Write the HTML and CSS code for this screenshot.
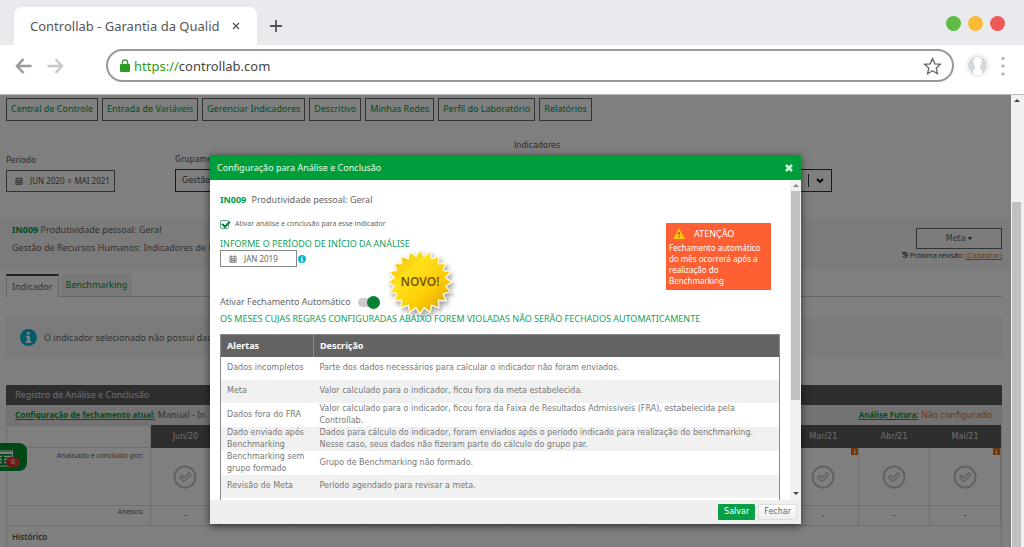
FILE: index.html
```html
<!DOCTYPE html>
<html lang="pt-BR">
<head>
<meta charset="utf-8">
<title>Controllab - Garantia da Qualidade</title>
<link rel="stylesheet" href="styles.css">
</head>
<body>
<svg class="defs" aria-hidden="true">
  <symbol id="cal" viewBox="0 0 14 14"><path fill="none" stroke="currentColor" stroke-width="1.2" d="M1.5 3h11v10h-11zM1.5 6h11M4.300 6v7M7 6v7M9.700 6v7M1.500 9.500h11"/><path stroke="currentColor" stroke-width="2" d="M4 1v3M10 1v3"/></symbol>
  <symbol id="info" viewBox="0 0 20 20"><circle cx="10" cy="10" r="10" fill="#0ab4d2"/><path fill="#fff" d="M8.200 3.500h3.400v3H8.200zM6.800 8h4.900v6.200h1.500v2.200H6.800v-2.200h1.500V10H6.800z"/></symbol>
  <symbol id="seal" viewBox="0 0 24 24"><circle cx="12" cy="12" r="10.500" fill="none" stroke="#c4c4c4" stroke-width="2"/><path d="M6.500 12.500l2-2 2.300 2.300 5-5 2 2-7 7z" fill="none" stroke="#c4c4c4" stroke-width="1.500"/></symbol>
</svg>
<header class="chrome">
  <div class="tabbar">
    <div class="tab"><span>Controllab - Garantia da Qualid</span>
      <button class="bare" aria-label="Fechar aba"><svg width="8" height="8" viewBox="0 0 8 8"><path d="M1 1l6 6M7 1L1 7" stroke="#555" stroke-width="1.300"/></svg></button></div>
    <button class="bare newtab" aria-label="Nova aba"><svg width="12" height="12" viewBox="0 0 12 12"><path d="M6 0v12M0 6h12" stroke="#555" stroke-width="1.800"/></svg></button>
    <div class="lights"><i class="green"></i><i class="yellow"></i><i class="red"></i></div>
  </div>
  <div class="toolbar">
    <button class="bare" aria-label="Voltar"><svg width="17" height="16" viewBox="0 0 17 16"><path d="M8.500 1L2 8l6.500 7M2 8h14.500" fill="none" stroke="#999" stroke-width="2.500"/></svg></button>
    <button class="bare" aria-label="Avançar"><svg width="17" height="16" viewBox="0 0 17 16"><path d="M8.500 1L15 8l-6.500 7M15 8H.5" fill="none" stroke="#c8c8c8" stroke-width="2.500"/></svg></button>
    <div class="address">
      <svg width="10" height="13" viewBox="0 0 10 13"><path d="M2.300 6V3.500a2.700 2.700 0 0 1 5.400 0V6" fill="none" stroke="#2f9a20" stroke-width="1.200"/><rect x="0" y="5" width="10" height="8" rx="1" fill="#2f9a20"/></svg>
      <span class="url"><span class="scheme">https://</span>controllab.com</span>
      <button class="bare" aria-label="Favoritar"><svg width="19" height="18" viewBox="0 0 19 18"><path d="M9.500 1.500l2.300 5.300 5.700.5-4.300 3.800 1.300 5.600-5-3-5 3 1.300-5.600L1.500 7.300l5.700-.5z" fill="none" stroke="#666" stroke-width="1.300"/></svg></button>
    </div>
    <svg class="avatar" width="23" height="23" viewBox="0 0 23 23"><circle cx="11.500" cy="11.500" r="11" fill="#fff" stroke="#e2e5e8"/><circle cx="11.500" cy="11.500" r="9.500" fill="#d3d8dd"/><path d="M11.500 3c3 0 4.300 2 4.200 4.800-.1 2-.9 3.400-1.700 4.400v2c0 1.200 1.500 1.800 2 2.600.4 2.200-1.500 4.200-4.500 4.200S6.600 19 7 16.800c.5-.8 2-1.400 2-2.600v-2C8.100 11 7.300 9.700 7.300 7.800 7.300 5 8.500 3 11.500 3z" fill="#fff"/></svg>
    <button class="bare" aria-label="Menu"><svg width="4" height="20" viewBox="0 0 4 20" fill="#b8b8b8"><circle cx="2" cy="2.500" r="1.800"/><circle cx="2" cy="10" r="1.800"/><circle cx="2" cy="18" r="1.800"/></svg></button>
  </div>
</header>
<div class="viewport">
  <main class="page">
    <nav class="nav">
      <a href="#">Central de Controle</a><a href="#">Entrada de Variáveis</a><a href="#">Gerenciar Indicadores</a><a href="#">Descritivo</a><a href="#">Minhas Redes</a><a href="#">Perfil do Laboratório</a><a href="#">Relatórios</a>
    </nav>
    <form class="filters">
      <div class="period"><label for="periodo">Período</label>
        <button type="button" id="periodo" class="date"><svg class="cal"><use href="#cal"/></svg>JUN 2020 <small>a</small> MAI 2021</button></div>
      <div class="group"><label for="grupo">Grupame</label>
        <select id="grupo"><option>Gestão</option></select></div>
      <div class="indicator"><label for="ind">Indicadores</label>
        <div class="chooser"><select id="ind"><option></option></select><svg width="8" height="6" viewBox="0 0 8 6"><path d="M1 1l3 3 3-3" fill="none" stroke="#000" stroke-width="1.800"/></svg></div></div>
    </form>
    <section class="summary">
      <div class="about"><p><b>IN009</b> Produtividade pessoal: Geral</p><p>Gestão de Recursos Humanos: Indicadores de G</p></div>
      <div class="goal"><button>Meta <i class="caret"></i></button>
        <p><svg width="6" height="6" viewBox="0 0 12 12"><path d="M2 3a5 5 0 1 1-.5 5M2 0v4h4M6 3v4h3" fill="none" stroke="#333" stroke-width="2"/></svg> Próxima revisão: <a href="#">(Cadastrar)</a></p></div>
    </section>
    <div class="tabs"><button class="on">Indicador</button><button>Benchmarking</button></div>
    <div class="notice"><svg width="17" height="17"><use href="#info"/></svg><span>O indicador selecionado não possui dad</span></div>
    <section class="register">
      <h2>Registro de Análise e Conclusão</h2>
      <div class="config"><span><a href="#">Configuração de fechamento atual:</a> Manual - In</span><span class="future"><a href="#">Análise Futura:</a> Não configurado</span></div>
      <table class="months">
        <thead><tr><td></td><th>Jun/20</th><th></th><th></th><th></th><th></th><th></th><th></th><th></th><th></th><th>Mar/21</th><th>Abr/21</th><th>Mai/21</th></tr></thead>
        <tbody>
          <tr class="signed"><th>Analisado e concluído por:</th><td><svg class="seal"><use href="#seal"/></svg></td><td></td><td></td><td></td><td></td><td></td><td></td><td></td><td></td><td><svg class="seal"><use href="#seal"/></svg><b class="flag">i</b></td><td><svg class="seal"><use href="#seal"/></svg></td><td><svg class="seal"><use href="#seal"/></svg><b class="flag">i</b></td></tr>
          <tr class="files"><th>Anexos:</th><td>-</td><td></td><td></td><td></td><td></td><td></td><td></td><td></td><td></td><td>-</td><td>-</td><td>-</td></tr>
        </tbody>
      </table>
      <h3>Histórico</h3>
    </section>
    <button class="dock" aria-label="Pendências"><svg width="13" height="17" viewBox="0 0 13 17"><path d="M0 1h12.500v15H0" fill="none" stroke="#fff" stroke-width="1.200"/><path d="M0 3h12" stroke="#fff" stroke-width="2"/><path d="M0 6.500h2M0 9.500h2M0 12.500h2M4 6.500h7M4 9.500h7M4 12.500h7" stroke="#fff" stroke-width="1.500"/></svg><span>0</span></button>
  </main>
  <div class="scroll pagescroll"><i class="up"></i><i class="thumb"></i></div>
  <div class="overlay">
    <div class="modal" role="dialog" aria-labelledby="mt">
      <div class="modalhead"><h1 id="mt">Configuração para Análise e Conclusão</h1>
        <button class="bare" aria-label="Fechar janela"><svg width="8" height="8" viewBox="0 0 8 8"><path d="M1 1l6 6M7 1L1 7" stroke="#c9f5d8" stroke-width="2.500"/></svg></button></div>
      <div class="modalmain">
        <div class="content">
          <div class="settings">
            <div class="fields">
              <p class="name"><b>IN009</b> Produtividade pessoal: Geral</p>
              <label class="enable"><input type="checkbox" class="check" checked>Ativar análise e conclusão para esse indicador</label>
              <label class="caps" for="inicio">INFORME O PERÍODO DE INÍCIO DA ANÁLISE</label>
              <div class="start"><button id="inicio" class="date"><svg class="cal"><use href="#cal"/></svg>JAN 2019</button><svg width="8" height="8"><use href="#info"/></svg></div>
              <label class="auto">Ativar Fechamento Automático<input type="checkbox" class="switch" checked></label>
            </div>
            <aside class="warning"><h2><svg width="12" height="11" viewBox="0 0 12 11"><path d="M6 0l6 11H0z" fill="#ffc20e"/><path d="M6 4v3M6 8v1.500" stroke="#a05a00" stroke-width="1.300"/></svg>ATENÇÃO</h2><p>Fechamento automático do mês ocorrerá após a realização do Benchmarking</p></aside>
            <div class="novo"><svg width="76" height="76" viewBox="-38 -38 76 76"><defs><linearGradient id="gold" x1="0" y1="0" x2="1" y2="1"><stop offset="0" stop-color="#e0b000"/><stop offset=".35" stop-color="#ffe11a"/><stop offset=".65" stop-color="#fbcb05"/><stop offset="1" stop-color="#cf9300"/></linearGradient></defs><polygon id="star" fill="url(#gold)" stroke="#fff8dc" stroke-width="1.500" points=""/></svg><span>NOVO!</span></div>
          </div>
          <p class="caps rules">OS MESES CUJAS REGRAS CONFIGURADAS ABAIXO FOREM VIOLADAS NÃO SERÃO FECHADOS AUTOMATICAMENTE</p>
          <table class="alerts">
            <thead><tr><th>Alertas</th><th>Descrição</th></tr></thead>
            <tbody>
              <tr><td>Dados incompletos</td><td>Parte dos dados necessários para calcular o indicador não foram enviados.</td></tr>
              <tr><td>Meta</td><td>Valor calculado para o indicador, ficou fora da meta estabelecida.</td></tr>
              <tr><td>Dados fora do FRA</td><td>Valor calculado para o indicador, ficou fora da Faixa de Resultados Admissíveis (FRA), estabelecida pela Controllab.</td></tr>
              <tr><td>Dado enviado após Benchmarking</td><td>Dados para cálculo do indicador, foram enviados após o período indicado para realização do benchmarking. Nesse caso, seus dados não fizeram parte do cálculo do grupo par.</td></tr>
              <tr><td>Benchmarking sem grupo formado</td><td>Grupo de Benchmarking não formado.</td></tr>
              <tr><td>Revisão de Meta</td><td>Período agendado para revisar a meta.</td></tr>
              <tr><td></td><td></td></tr>
            </tbody>
          </table>
        </div>
        <div class="scroll modalscroll"><i class="up"></i><i class="thumb"></i><i class="down"></i></div>
      </div>
      <footer><button class="save">Salvar</button><button class="close">Fechar</button></footer>
    </div>
  </div>
</div>
<script src="seal.js"></script>
</body>
</html>
```
FILE: seal.js
```js
// Star outline with alternating outer and inner radii.
const points = [];
const tips = 20;
for (let i = 0; i < tips * 2; i++) {
  const r = i % 2 ? 26 : 32;
  const a = Math.PI * i / tips - Math.PI / 2;
  points.push((r * Math.cos(a)).toFixed(1) + ',' + (r * Math.sin(a)).toFixed(1));
}
document.getElementById('star').setAttribute('points', points.join(' '));
```
FILE: styles.css
```css
* { box-sizing: border-box; }
body { margin: 0; height: 100vh; display: flex; flex-direction: column; overflow: hidden; font: 9px/12px "Noto Sans", sans-serif; color: #666; }
h1, h2, h3, p { margin: 0; font-size: 9px; }
button, select { font: inherit; color: inherit; margin: 0; }
svg { flex: none; }
.defs { position: absolute; width: 0; height: 0; }
.bare { border: 0; background: none; padding: 0; display: flex; }

.filters label, .filters select, .months, .alerts, .goal button, .modal footer { font-family: "DejaVu Sans", sans-serif; font-size: 8px; }
.tabbar { height: 45px; background: #e8eaed; display: flex; align-items: center; padding: 7px 19px 0 14px; }
.tab { align-self: stretch; width: 243px; background: #fff; border-radius: 8px 8px 0 0; display: flex; align-items: center; justify-content: space-between; padding: 0 17px 0 16px; font-size: 13px; color: #555; white-space: nowrap; }
.newtab { margin-left: 13px; }
.lights { margin-left: auto; display: flex; gap: 7px; padding-bottom: 6px; }
.lights i { width: 15px; height: 15px; border-radius: 50%; }
.green { background: #5fba46; }
.yellow { background: #fbb938; }
.red { background: #ee5a55; }
.toolbar { height: 50px; background: #fff; border-bottom: 1px solid #bbb; display: flex; align-items: center; gap: 15px; padding: 0 19px 8px 15px; }
.address { flex: 1; height: 33px; margin-left: 27px; margin-right: -3px; border: 2px solid #999; border-radius: 17px; display: flex; align-items: center; padding: 0 10px 0 12px; gap: 4px; }
.url { flex: 1; font-size: 13px; color: #444; }
.scheme { color: #2f9a20; }
.avatar { margin-right: -3px; }

.viewport { position: relative; flex: 1; min-height: 0; display: flex; overflow: hidden; }
.page { flex: 1; min-width: 0; position: relative; background: #fff; }
.nav { display: flex; gap: 4px; padding: 3px 6px 0; }
.nav a { height: 23px; padding: 0 4px; line-height: 20px; border: 1px solid #666; color: #009b3a; text-decoration: none; white-space: nowrap; }
.filters { display: flex; align-items: flex-end; padding: 0 179px 0 6px; height: 71px; margin-bottom: 26px; color: #555; }
.filters label { display: block; margin-bottom: 3px; }
.period { width: 169px; }
.filters .date { width: 109px; height: 22px; }
.date { display: flex; align-items: center; gap: 3px; border: 1px solid #666; background: #fff; padding: 0 8px; font-size: 8px; white-space: nowrap; }
.cal { width: 8px; height: 8px; margin-right: 4px; }
.date small { font-size: 7px; color: #777; }
.group { width: 333px; }
.filters select { width: 100%; height: 23px; appearance: none; border: 1px solid #333; border-radius: 0; background: #fff; padding: 0 6px; color: #444; }
.indicator { flex: 1; padding-left: 6px; }
.filters .indicator label { margin-bottom: 17px; }
.chooser { display: flex; height: 23px; border: 1px solid #333; align-items: center; padding-right: 7px; }
.filters .chooser select { flex: 1; height: 13px; border: 0; border-right: 1px solid #333; margin-right: 7px; }
.summary { display: flex; justify-content: space-between; background: #f7f7f7; padding: 6px 9px 0 12px; height: 51px; margin-bottom: 5px; }
.about { display: flex; flex-direction: column; gap: 6px; }
.about b, .name b { color: #009b48; }
.goal { text-align: right; padding-top: 4px; }
.goal button { width: 86px; height: 21px; border: 1px solid #666; background: none; padding: 0; }
.goal p { font-size: 7px; color: #444; margin-top: 1px; }
.goal a { color: #e86c10; }
.caret { display: inline-block; border: 2px solid transparent; border-top: 3px solid #333; border-bottom: 0; vertical-align: middle; }
.tabs { display: flex; gap: 2px; margin: 0 9px 20px 6px; height: 23px; border-bottom: 1px solid #ccc; }
.tabs button { border: 0; background: #f2f2f2; color: #009b3a; padding: 0 5px; }
.tabs .on { background: #fff; border: 1px solid #ccc; border-top: 2px solid #444; border-bottom: 0; color: #666; margin-bottom: -1px; }
.notice { display: flex; align-items: center; gap: 7px; height: 41px; margin: 0 9px 27px 6px; padding-left: 14px; background: #f7f7f7; }
.register { margin: 0 9px 0 6px; border: 1px solid #ddd; border-width: 0 1px; }
.register h2 { background: #5c5c5c; color: #ddd; height: 20px; line-height: 20px; padding-left: 9px; margin: 0 -1px; font-weight: 400; }
.config { display: flex; justify-content: space-between; background: #e6e6e6; height: 20px; line-height: 20px; padding: 0 9px 0 8px; }
.config a { color: #009b3a; font-size: 8px; font-weight: 700; }
.future { color: #e86c10; }
.months { width: 100%; border-collapse: collapse; table-layout: fixed; }
.months td, .months th { border: 1px solid #ddd; padding: 0; text-align: center; font-weight: 400; position: relative; }
.months tr > :first-child { width: 143px; border-left: 0; }
.months thead th { background: #5c5c5c; color: #ddd; height: 22px; border-color: #5c5c5c; }
.months tbody th { text-align: right; font-family: "Noto Sans", sans-serif; font-size: 7px; padding-right: 6px; vertical-align: top; }
.signed { height: 58px; }
.files { height: 20px; }
.signed th { padding-top: 2px; }
.seal { width: 24px; height: 24px; display: block; margin: auto; }
.flag { position: absolute; top: 0; right: 0; width: 7px; height: 7px; background: #e86c10; color: #fff; font-size: 6px; line-height: 7px; }
.register h3 { padding: 5px; font-size: 8px; font-weight: 600; color: #555; }
.dock { position: absolute; left: 0; top: 348px; width: 27px; height: 28px; border: 0; border-radius: 0 8px 8px 0; background: #00922f; padding: 5px 0 0; text-align: left; }
.dock span { position: absolute; left: 6px; top: 14px; width: 14px; height: 10px; border-radius: 5px; background: #e53935; color: #fff; font-size: 7px; line-height: 10px; text-align: center; }

.scroll { display: flex; flex-direction: column; align-items: center; background: #f1f1f1; }
.pagescroll { width: 13px; padding-right: 2px; position: relative; z-index: 2; }
.up, .down { border: 3px solid transparent; }
.up { border-bottom-color: #444; border-top: 0; margin-top: 4px; }
.down { border-top: 3px solid #444; border-bottom: 0; margin: auto 0 5px; }
.thumb { width: 9px; background: #c1c1c1; }
.pagescroll .thumb { flex: 1; margin-top: 100px; }

.overlay { position: absolute; inset: 0 13px 0 0; background: rgba(0, 0, 0, .5); display: flex; justify-content: center; padding: 60px 16px 23px; }
.modal { flex: 0 1 591px; display: flex; flex-direction: column; background: #fff; box-shadow: 0 2px 8px rgba(0, 0, 0, .6); }
.modalhead { height: 25px; background: #009e3a; display: flex; align-items: center; justify-content: space-between; padding: 0 8px 0 7px; }
.modalhead h1 { color: #e4ffe9; font-weight: 400; }
.modalmain { flex: 1; min-height: 0; display: flex; overflow: hidden; }
.content { flex: 1; padding: 14px 10px 0; }
.modalscroll { width: 11px; }
.modalscroll .up { border-bottom-color: #888; }
.modalscroll .thumb { height: 209px; margin-top: 4px; }
.settings { position: relative; display: flex; justify-content: space-between; padding-right: 9px; }
.name { margin-bottom: 12px; }
.name b { margin-right: 3px; }
.enable { display: flex; align-items: center; gap: 6px; font-size: 7px; height: 12px; margin-bottom: 8px; }
.check { appearance: none; position: relative; width: 9px; height: 9px; margin: 0; border: 1px solid #5bab83; border-radius: 2px; }
.check:checked::after { content: ""; position: absolute; left: 1px; top: 0; width: 6px; height: 3px; border: solid #007a3d; border-width: 0 0 2px 2px; transform: rotate(-45deg); }
.caps { display: block; color: #14a05c; white-space: nowrap; }
.start { display: flex; align-items: center; gap: 1px; margin-bottom: 28px; }
.start .date { width: 77px; height: 17px; border-color: #888; }
.auto { display: flex; align-items: center; gap: 7px; height: 14px; }
.switch { appearance: none; position: relative; width: 22px; height: 9px; margin: 0; border-radius: 5px; background: #ccc; }
.switch::after { content: ""; position: absolute; right: 0; top: -2px; width: 13px; height: 13px; border-radius: 50%; background: #078034; }
.warning { width: 105px; height: 67px; margin-top: 29px; background: #ff6033; color: #fff; padding: 5px 4px 0 3px; line-height: 11px; }
.warning h2 { display: flex; align-items: center; gap: 9px; padding-left: 4px; margin-bottom: 3px; font-weight: 400; }
.warning p { font-size: 8px; }
.novo { position: absolute; left: 162px; top: 50px; width: 76px; height: 76px; display: grid; place-items: center; font-size: 12px; font-weight: 600; color: #7a5a08; }
.novo svg, .novo span { grid-area: 1 / 1; }
.novo svg { filter: drop-shadow(2px 3px 2px rgba(0, 0, 0, .35)); }
.novo span { position: relative; }
.rules { margin: 4px 0 9px; }
.alerts { width: 100%; border-collapse: collapse; border: 1px solid #888; color: #777; table-layout: fixed; }
.alerts th { background: #636363; color: #fff; text-align: left; height: 22px; border-right: 1px solid #888; font-family: "Noto Sans", sans-serif; font-size: 9px; }
.alerts th:first-child { width: 93px; }
.alerts td, .alerts th { padding: 0 6px; }
.alerts td { height: 23px; }
.alerts tbody tr:nth-child(even) { background: #f1f1f1; }
.modal footer { height: 24px; background: #efefef; display: flex; justify-content: flex-end; gap: 3px; padding: 4px; }
.modal footer button { height: 16px; padding: 0 5px; line-height: 14px; border: 1px solid #ddd; border-radius: 1px; background: linear-gradient(#fff, #eee); }
.modal footer .save { background: #07a046; border-color: #07a046; color: #fff; }
```
